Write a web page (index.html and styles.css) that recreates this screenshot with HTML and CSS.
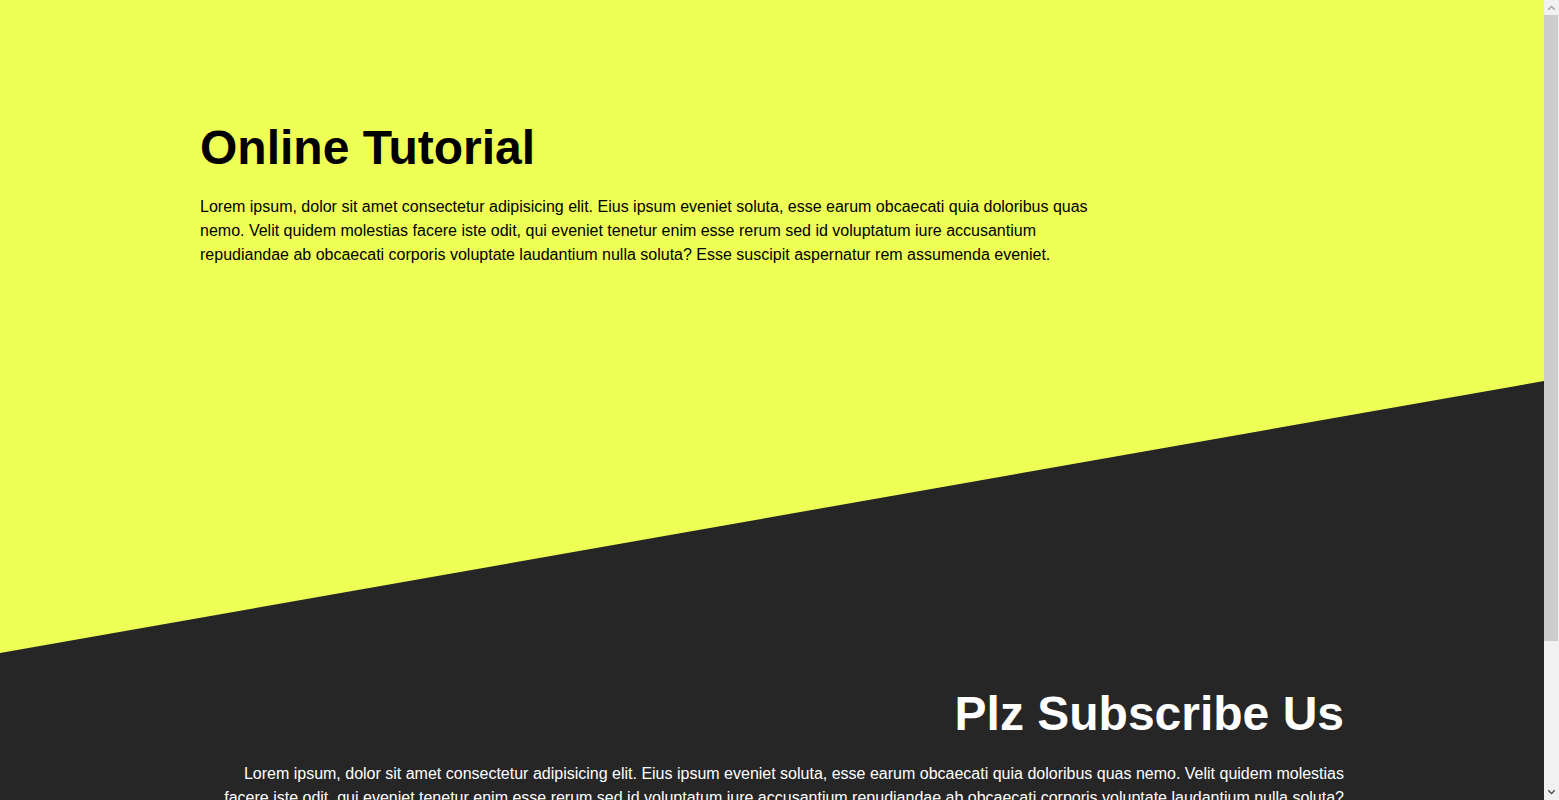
FILE: index.html
```html
<!DOCTYPE html>
<html lang="en">
<head>
<meta charset="utf-8">
<title>Online Tutorial</title>
<link rel="stylesheet" href="styles.css">
</head>
<body>
<main class="page">
  <section class="hero">
    <div class="hero-inner">
      <h1 class="hero-title">Online Tutorial</h1>
      <p class="hero-text">Lorem ipsum, dolor sit amet consectetur adipisicing elit. Eius ipsum eveniet soluta, esse earum obcaecati quia doloribus quas nemo. Velit quidem molestias facere iste odit, qui eveniet tenetur enim esse rerum sed id voluptatum iure accusantium repudiandae ab obcaecati corporis voluptate laudantium nulla soluta? Esse suscipit aspernatur rem assumenda eveniet.</p>
    </div>
  </section>
  <section class="subscribe">
    <h2 class="subscribe-title">Plz Subscribe Us</h2>
    <p class="subscribe-text">Lorem ipsum, dolor sit amet consectetur adipisicing elit. Eius ipsum eveniet soluta, esse earum obcaecati quia doloribus quas nemo. Velit quidem molestias facere iste odit, qui eveniet tenetur enim esse rerum sed id voluptatum iure accusantium repudiandae ab obcaecati corporis voluptate laudantium nulla soluta? Esse suscipit aspernatur rem assumenda eveniet.</p>
  </section>
</main>
<div class="scrollbar" aria-hidden="true">
  <div class="sb-btn">
    <svg width="15" height="15" viewBox="0 0 15 15"><polygon points="4,9 7.5,5.5 11,9 11,10 10,10 7.5,7.5 5,10 4,10" fill="#a3a3a3"/></svg>
  </div>
  <div class="sb-thumb"></div>
  <div class="sb-track"></div>
  <div class="sb-btn">
    <svg width="15" height="15" viewBox="0 0 15 15"><polygon points="4,5 5,5 7.5,7.5 10,5 11,5 11,6 7.5,9.5 4,6" fill="#505050"/></svg>
  </div>
</div>
</body>
</html>
```
FILE: styles.css
```css
* {
  box-sizing: border-box;
}

html, body {
  margin: 0;
  padding: 0;
}

body {
  background: #262626;
  font-family: "Liberation Sans", Arial, sans-serif;
  font-size: 16px;
  line-height: 24px;
}

.page {
  margin-right: 15px;
}

.hero {
  height: 653px;
  background: #eeff55;
  clip-path: polygon(0 0, 100% 0, 100% 381px, 0 100%);
  padding: 120px 200px 0;
  color: #000;
}

.hero-title {
  margin: 0 0 20px;
  font-size: 48px;
  line-height: 55px;
  font-weight: 700;
}

.hero-text {
  margin: 0;
  max-width: 900px;
}

.subscribe {
  height: 331px;
  padding: 33px 200px 0;
  color: #fff;
  text-align: right;
}

.subscribe-title {
  margin: 0 0 21px;
  font-size: 48px;
  line-height: 55px;
  font-weight: 700;
}

.subscribe-text {
  margin: 0;
}

.scrollbar {
  position: fixed;
  top: 0;
  right: 0;
  width: 15px;
  height: 100vh;
  background: #f1f1f1;
  display: flex;
  flex-direction: column;
}

.sb-btn {
  height: 15px;
  flex: none;
}

.sb-btn svg {
  display: block;
}

.sb-thumb {
  height: 626px;
  flex: none;
  margin: 0 1px 0 0;
  background: #cdcdcd;
}

.sb-track {
  flex: 1;
}
```
